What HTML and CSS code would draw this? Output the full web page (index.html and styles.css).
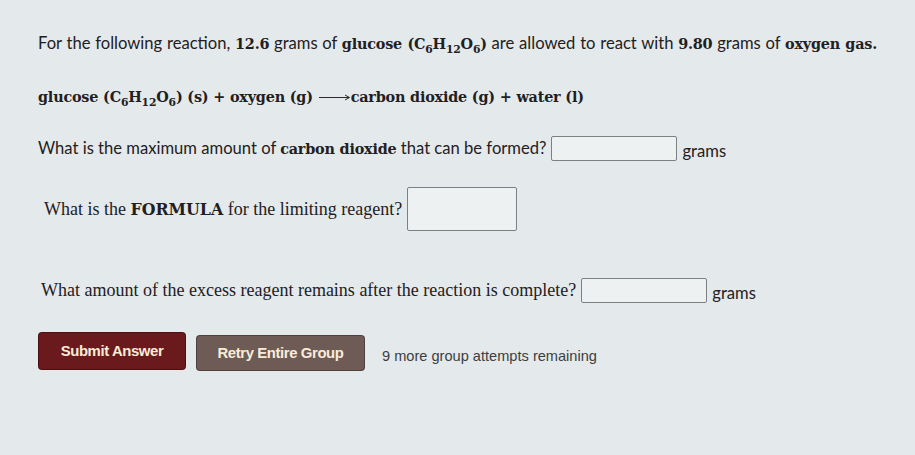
FILE: index.html
```html
<!DOCTYPE html>
<html>
<head>
<meta charset="utf-8">
<link rel="stylesheet" href="styles.css">
</head>
<body>
<div class="page">
  <p class="intro">For the following reaction, <b class="chem">12.6</b> grams of <b class="chem">glucose (C<sub>6</sub>H<sub>12</sub>O<sub>6</sub>)</b> are allowed to react with <b class="chem">9.80</b> grams of <b class="chem">oxygen gas.</b></p>

  <p class="equation">glucose (C<sub>6</sub>H<sub>12</sub>O<sub>6</sub>) (s) + oxygen (g) <svg class="arrow" width="32" height="10" viewBox="0 0 32 10"><path d="M0 5.5H30" stroke="#2a2a2c" stroke-width="1"/><path d="M26 3l4.5 2.5L26 8" fill="none" stroke="#2a2a2c" stroke-width="1"/></svg>carbon dioxide (g) + water (l)</p>

  <div class="q q1">
    <span class="label sans">What is the maximum amount of <b class="chem">carbon dioxide</b> that can be formed?</span>
    <span class="box box-wide"></span>
    <span class="unit">grams</span>
  </div>

  <div class="q q2">
    <span class="label serif">What is the <b>FORMULA</b> for the limiting reagent?</span>
    <span class="box box-tall"></span>
  </div>

  <div class="q q3">
    <span class="label serif">What amount of the excess reagent remains after the reaction is complete?</span>
    <span class="box box-wide"></span>
    <span class="unit">grams</span>
  </div>

  <div class="actions">
    <button class="btn btn-submit">Submit Answer</button>
    <button class="btn btn-retry">Retry Entire Group</button>
    <span class="remaining">9 more group attempts remaining</span>
  </div>
</div>
</body>
</html>
```

FILE: styles.css
```css
html, body {
  margin: 0;
  padding: 0;
  background: #e4e9eb;
  width: 915px;
  height: 455px;
  overflow: hidden;
}

.page {
  padding: 32px 0 0 38px;
  color: #1f2022;
  font-family: "Lato", "Liberation Sans", sans-serif;
  font-size: 16.6px;
}

p { margin: 0; }

.chem {
  font-family: "DejaVu Serif", serif;
  font-weight: bold;
  font-size: 14.4px;
  letter-spacing: -0.2px;
}

sub {
  font-size: 75%;
  vertical-align: -4px;
  line-height: 0;
}

.intro {
  line-height: 22px;
  word-spacing: 0.5px;
}

.equation {
  margin-top: 31px;
  font-family: "DejaVu Serif", serif;
  font-weight: bold;
  font-size: 14.4px;
  letter-spacing: -0.2px;
  line-height: 22px;
}

.arrow {
  display: inline-block;
  vertical-align: 0;
  margin-left: 1px;
}

.q {
  display: flex;
  align-items: center;
}

.q1 { margin-top: 27px; }
.q2 { margin-top: 26px; padding-left: 6px; }
.q3 { margin-top: 46px; padding-left: 3px; }

.serif {
  font-family: "Liberation Serif", serif;
  font-size: 18px;
}

.serif b {
  font-family: "DejaVu Serif", serif;
  font-size: 15.8px;
}

.box {
  display: inline-block;
  box-sizing: border-box;
  border: 1px solid #7d8083;
  border-radius: 2px;
  background: #eef1f2;
  margin-left: 5px;
}

.box-wide { width: 126px; height: 25px; }
.box-tall { width: 110px; height: 44px; }

.unit {
  margin-left: 5px;
  margin-top: 6px;
}

.actions {
  display: flex;
  align-items: center;
  margin-top: 29px;
  padding-left: 1px;
}

.btn {
  border: none;
  border-radius: 3px;
  color: #f8ecd9;
  font-family: "Liberation Sans", Arial, sans-serif;
  font-weight: bold;
  font-size: 14.9px;
  letter-spacing: -0.4px;
  height: 36px;
  padding: 0;
}

.btn-submit {
  width: 146px;
  background: #6a1a1c;
  box-shadow: 0 0 0 1px #4c1012;
}

.btn-retry {
  width: 167px;
  height: 34px;
  margin-left: 12px;
  margin-top: 4px;
  background: #6f5b56;
  box-shadow: 0 0 0 1px #4e403c;
}

.remaining {
  margin-left: 18px;
  margin-top: 10px;
  font-family: "Liberation Sans", Arial, sans-serif;
  font-size: 14.6px;
  color: #3d3e40;
}
```
